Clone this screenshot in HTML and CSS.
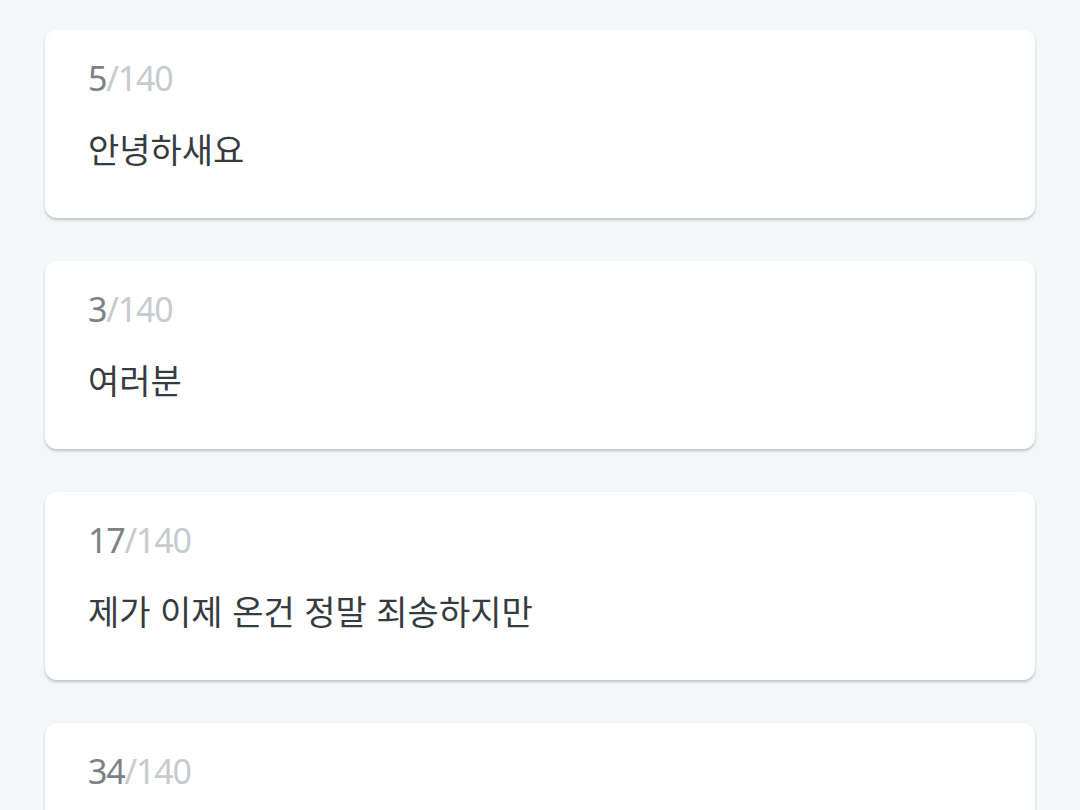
FILE: index.html
```html
<!DOCTYPE html>
<html lang="ko">
<head>
<meta charset="utf-8">
<link rel="stylesheet" href="styles.css">
</head>
<body>
<div class="list">
  <div class="card">
    <div class="counter"><span class="cur">5</span><span class="max">/140</span></div>
    <div class="text">안녕하새요</div>
  </div>
  <div class="card">
    <div class="counter"><span class="cur">3</span><span class="max">/140</span></div>
    <div class="text">여러분</div>
  </div>
  <div class="card">
    <div class="counter"><span class="cur">17</span><span class="max">/140</span></div>
    <div class="text">제가 이제 온건 정말 죄송하지만</div>
  </div>
  <div class="card">
    <div class="counter"><span class="cur">34</span><span class="max">/140</span></div>
    <div class="text"></div>
  </div>
</div>
</body>
</html>
```
FILE: styles.css
```css
html, body {
  margin: 0;
  padding: 0;
  background: #f4f7f8;
  height: 810px;
  overflow: hidden;
}
body {
  font-family: "Noto Sans CJK KR", "Noto Sans", sans-serif;
}
.list {
  display: flex;
  flex-direction: column;
  gap: 43px;
  padding: 30px 45px 0 45px;
}
.card {
  background: #ffffff;
  border-radius: 12px;
  height: 188px;
  box-sizing: border-box;
  padding: 28px 43px 0 43px;
  box-shadow: 0 2px 3px rgba(0, 0, 0, 0.22);
}
.counter {
  font-family: "Noto Sans", sans-serif;
  font-size: 34px;
  line-height: 40px;
  height: 40px;
  letter-spacing: -1.2px;
  display: flex;
  align-items: center;
}
.cur { color: #7b8187; }
.max { color: #c6cbd0; }
.text {
  margin-top: 31px;
  font-size: 34px;
  font-weight: 400;
  line-height: 40px;
  color: #363b40;
}
```
